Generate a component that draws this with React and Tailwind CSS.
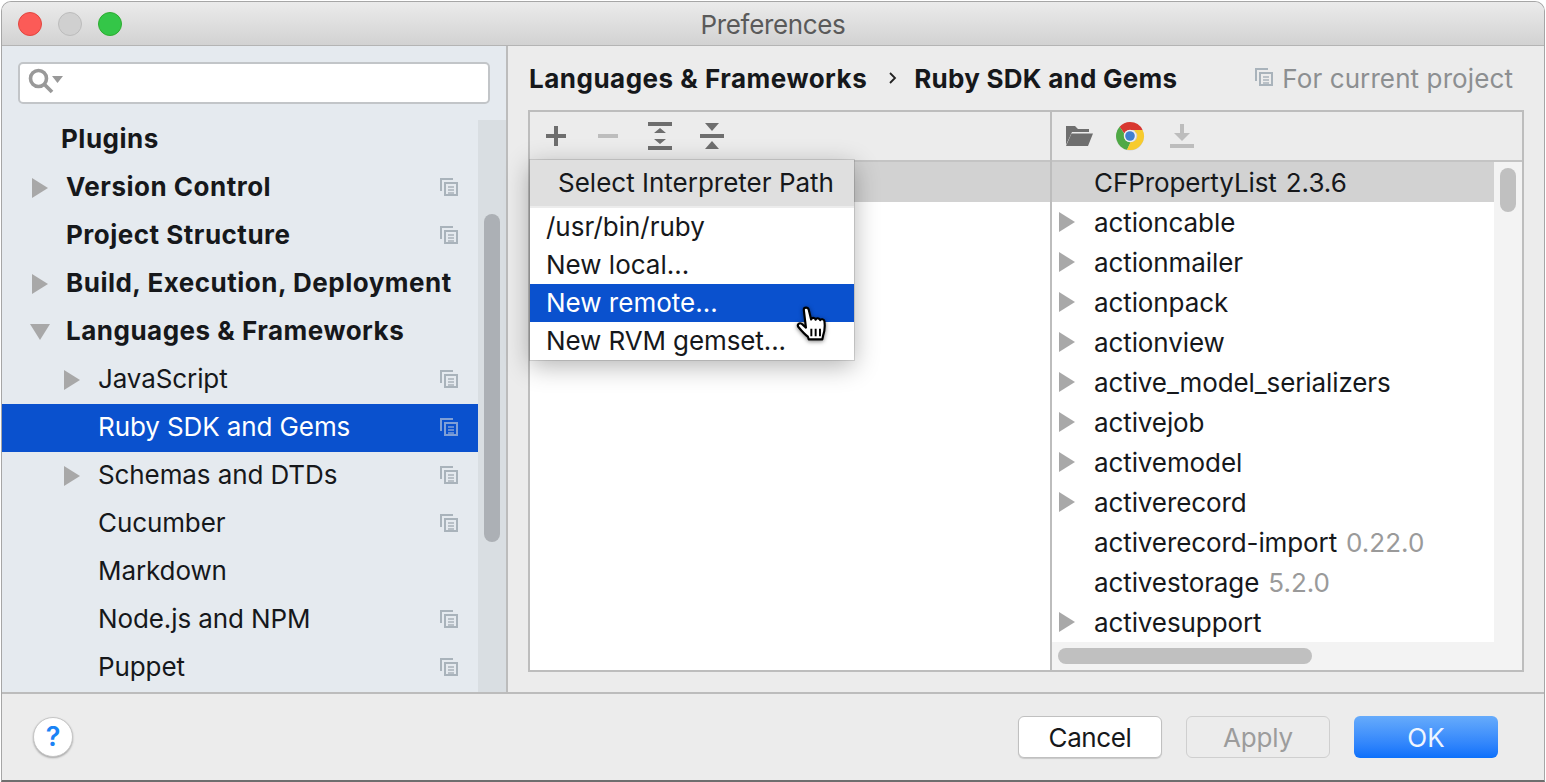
import React from "react";

const sidebarRows = [
  { label: "Plugins", bold: true, pad: "pl-[59px]", copy: false },
  { label: "Version Control", bold: true, pad: "pl-[30px]", gutter: "w-[34px]", arrow: "right", copy: true },
  { label: "Project Structure", bold: true, pad: "pl-[30px]", gutter: "w-[34px]", copy: true },
  { label: "Build, Execution, Deployment", bold: true, pad: "pl-[30px]", gutter: "w-[34px]", arrow: "right", copy: false },
  { label: "Languages & Frameworks", bold: true, pad: "pl-[30px]", gutter: "w-[34px]", arrow: "down", copy: false },
  { label: "JavaScript", pad: "pl-[62px]", gutter: "w-[34px]", arrow: "right", copy: true },
  { label: "Ruby SDK and Gems", pad: "pl-[62px]", gutter: "w-[34px]", copy: true, selected: true },
  { label: "Schemas and DTDs", pad: "pl-[62px]", gutter: "w-[34px]", arrow: "right", copy: true },
  { label: "Cucumber", pad: "pl-[62px]", gutter: "w-[34px]", copy: true },
  { label: "Markdown", pad: "pl-[62px]", gutter: "w-[34px]", copy: false },
  { label: "Node.js and NPM", pad: "pl-[62px]", gutter: "w-[34px]", copy: true },
  { label: "Puppet", pad: "pl-[62px]", gutter: "w-[34px]", copy: true },
];

const gems = [
  { name: "CFPropertyList", version: "2.3.6", selected: true, dark: true },
  { name: "actioncable", arrow: true },
  { name: "actionmailer", arrow: true },
  { name: "actionpack", arrow: true },
  { name: "actionview", arrow: true },
  { name: "active_model_serializers", arrow: true },
  { name: "activejob", arrow: true },
  { name: "activemodel", arrow: true },
  { name: "activerecord", arrow: true },
  { name: "activerecord-import", version: "0.22.0" },
  { name: "activestorage", version: "5.2.0" },
  { name: "activesupport", arrow: true },
];

const CopyIcon = ({ color = "#a9b3bb" }) => (
  <svg width="18" height="18" viewBox="0 0 18 18" fill="none" stroke={color} strokeWidth="2" className="-mt-[2px]">
    <path d="M13 1H1v12" />
    <rect x="5" y="5" width="12" height="12" />
    <path d="M8 9h6M8 12h6M8 15h6" strokeWidth="1.6" />
  </svg>
);

const ArrowRight = () => (
  <svg width="16" height="20" viewBox="0 0 16 20" fill="#a8a8a8">
    <path d="M0 0l16 10L0 20z" />
  </svg>
);

const ArrowDown = () => (
  <svg width="20" height="16" viewBox="0 0 20 16" fill="#a8a8a8" className="-ml-[2px]">
    <path d="M0 0h20L10 16z" />
  </svg>
);

const SearchIcon = () => (
  <svg width="36" height="26" viewBox="0 0 36 26" fill="none" className="-mt-[4px]">
    <circle cx="10.5" cy="10.5" r="8" stroke="#999" strokeWidth="3.6" />
    <path d="M16 16l8 8" stroke="#999" strokeWidth="3.8" />
    <path d="M24 8h11l-5.5 7z" fill="#999" />
  </svg>
);

const ChromeIcon = () => (
  <svg width="30" height="30" viewBox="0 0 30 30">
    <circle cx="15" cy="15.6" r="14" fill="#000" opacity="0.12" />
    <path d="M15 1a14 14 0 0 1 12.6 8H15a6 6 0 0 0-5.6 3.6L4.6 5.7A14 14 0 0 1 15 1z" fill="#d8372f" />
    <path d="M4.6 5.7l4.8 7.4a6 6 0 0 0 6.3 7.9L12 28.7A14 14 0 0 1 4.6 5.7z" fill="#4fa945" />
    <path d="M27.6 9A14 14 0 0 1 12 28.7l3.7-7.7A6 6 0 0 0 20 10.4L19 9z" fill="#f7cb2d" />
    <circle cx="15" cy="15" r="6.2" fill="#f1f1f1" />
    <circle cx="15" cy="15" r="4.8" fill="#3f7fd0" />
  </svg>
);

const HandCursor = () => (
  <svg width="35" height="41" viewBox="0 0 32 38" className="drop-shadow-[0_1px_2px_rgba(0,0,0,0.5)]">
    <path
      d="M7 3.500c0-2.600 4-2.600 4.600 0l2.200 9c.3-2 3.600-2.200 4.200.2.400-1.800 3.600-1.800 4.200.4.600-1.400 3.600-1 3.900 1 .6 4 .3 9-1.200 13.400l-.7 3.400H11.600l-.8-2.400C8 26.500 4.500 22.500 2 19.500c-1.500-2 .8-4.500 3-3l4 3.500z"
      fill="#fff"
      stroke="#000"
      strokeWidth="2"
      strokeLinejoin="round"
    />
    <path d="M14 21v7M18 21v7M22 21v7" stroke="#000" strokeWidth="1.8" />
  </svg>
);

const SidebarRow = ({ row }) => (
  <div
    className={`flex h-[48px] items-center pr-[20px] ${row.pad} ${row.selected ? "bg-[#0a51ce] text-white" : "text-[#16181b]"}`}
  >
    {row.gutter && (
      <div className={`${row.gutter} flex items-center`}>
        {row.arrow === "right" && <ArrowRight />}
        {row.arrow === "down" && <ArrowDown />}
      </div>
    )}
    <span className={`flex-1 pb-[4px] text-[26px] whitespace-nowrap ${row.bold ? "font-bold tracking-[0.5px]" : "tracking-[-0.1px]"}`}>
      {row.label}
    </span>
    {row.copy && <CopyIcon color={row.selected ? "#7f9fd6" : "#a9b3bb"} />}
  </div>
);

const GemRow = ({ gem }) => (
  <div className={`flex h-[40px] items-center pl-[7px] ${gem.selected ? "bg-[#d2d2d2]" : ""}`}>
    <div className="flex w-[35px] items-center">{gem.arrow && <ArrowRight />}</div>
    <span className="text-[26px] tracking-[-0.1px] text-[#16181b] whitespace-nowrap">{gem.name}</span>
    {gem.version && (
      <span className={`ml-[9px] text-[26px] ${gem.dark ? "text-[#16181b]" : "text-[#9a9a9a]"}`}>{gem.version}</span>
    )}
  </div>
);

const FooterButton = ({ children, className }) => (
  <button className={`flex h-[42px] w-[144px] items-center justify-center rounded-[6px] text-[26px] ${className}`}>
    {children}
  </button>
);

export default function App() {
  return (
    <div className="h-[782px] w-[1546px] overflow-hidden bg-white px-[1px] pt-[1px] font-['Inter',sans-serif]">
      <div className="flex h-[781px] flex-col overflow-hidden rounded-t-[10px] border border-b-2 border-[#a6a6a6] border-b-[#6e6e6e] bg-[#ececec]">
        {/* title bar */}
        <div className="relative flex h-[44px] shrink-0 items-center justify-center border-b border-[#b4b4b4] bg-gradient-to-b from-[#ebebeb] to-[#d2d2d2]">
          <div className="absolute left-[16px] top-[10px] flex gap-[16px]">
            <div className="h-[24px] w-[24px] rounded-full border border-[#e2463f] bg-[#fc5b57]"></div>
            <div className="h-[24px] w-[24px] rounded-full border border-[#bcbcbc] bg-[#d0d0d0]"></div>
            <div className="h-[24px] w-[24px] rounded-full border border-[#2dac2f] bg-[#34c648]"></div>
          </div>
          <span className="pt-[2px] text-[26px] tracking-[-0.35px] text-[#5a5a5a]">Preferences</span>
        </div>

        <div className="flex h-[648px] shrink-0 border-b-2 border-[#bcbcbc]">
          {/* sidebar */}
          <div className="flex w-[506px] shrink-0 flex-col border-r-2 border-[#bcbcbc] bg-[#e5eaef]">
            <div className="h-[74px] shrink-0 pl-[16px] pr-[16px] pt-[16px]">
              <div className="flex h-[42px] w-[472px] items-center rounded-[5px] border-2 border-[#c2c5c8] bg-white pl-[8px]">
                <SearchIcon />
              </div>
            </div>
            <div className="flex min-h-0 flex-1">
              <div className="-mt-[4px] w-[476px] shrink-0">
                {sidebarRows.map((row) => (
                  <SidebarRow key={row.label} row={row} />
                ))}
              </div>
              <div className="flex-1 bg-[#d9dee2] pl-[6px] pt-[94px]">
                <div className="h-[328px] w-[16px] rounded-full bg-[#acb0b5]"></div>
              </div>
            </div>
          </div>

          {/* main */}
          <div className="flex min-w-0 flex-1 flex-col pl-[20px] pr-[20px]">
            <div className="flex h-[64px] shrink-0 items-center justify-between pl-[1px] pr-[11px]">
              <div className="flex items-center text-[26px] font-bold tracking-[0.5px] text-[#16181b]">
                <span>Languages &amp; Frameworks</span>
                <svg width="8" height="14" viewBox="0 0 8 14" fill="none" stroke="#222" strokeWidth="1.8" className="ml-[22px] mr-[17px]">
                  <path d="M1 2l5 5-5 5" />
                </svg>
                <span className="tracking-[0.25px]">Ruby SDK and Gems</span>
              </div>
              <div className="flex items-center gap-[9px] text-[26px] tracking-[0.1px] text-[#8c8f91]">
                <CopyIcon />
                <span>For current project</span>
              </div>
            </div>

            <div className="relative flex h-[562px] w-[996px] shrink-0 border-2 border-[#bdbdbd] bg-white">
              {/* interpreters */}
              <div className="flex w-[522px] shrink-0 flex-col border-r-2 border-[#bdbdbd]">
                <div className="flex h-[50px] shrink-0 items-center gap-[28px] border-b-2 border-[#c4c4c4] bg-[#ececec] pl-[14px]">
                  <svg width="24" height="24" viewBox="0 0 24 24" fill="#6e6e6e" className="-mt-[1px]">
                    <path d="M2 10h8V2h4v8h8v4h-8v8h-4v-8H2z" />
                  </svg>
                  <svg width="24" height="24" viewBox="0 0 24 24" fill="#bdbdbd" className="-mt-[1px]">
                    <path d="M2 10h20v4H2z" />
                  </svg>
                  <svg width="24" height="28" viewBox="0 0 24 28" fill="#6e6e6e">
                    <path d="M0 0h24v4H0zM0 24h24v4H0zM12 6l6 5H6zM6 17h12l-6 5z" />
                  </svg>
                  <svg width="24" height="28" viewBox="0 0 24 28" fill="#6e6e6e">
                    <path d="M0 12h24v4H0zM5 1h14l-7 8zM12 19l7 8H5z" />
                  </svg>
                </div>
                <div className="h-[40px] shrink-0 bg-[#d2d2d2]"></div>
              </div>

              {/* gems */}
              <div className="flex min-w-0 flex-1 flex-col">
                <div className="flex h-[50px] shrink-0 items-center border-b-2 border-[#c4c4c4] bg-[#ececec] pl-[13px]">
                  <svg width="28" height="22" viewBox="0 0 28 22" fill="#6e6e6e">
                    <path d="M1 20V1h9l3 3h11v3H7z" />
                    <path d="M6.500 8.500H28L23 21H1z" />
                  </svg>
                  <div className="ml-[22px]">
                    <ChromeIcon />
                  </div>
                  <svg width="24" height="24" viewBox="0 0 24 24" fill="#bdbdbd" className="ml-[25px]">
                    <path d="M10 0h4v9h6l-8 8-8-8h6zM0 20h24v4H0z" />
                  </svg>
                </div>
                <div className="flex min-h-0 flex-1">
                  <div className="w-[442px] shrink-0 overflow-hidden">
                    {gems.map((gem) => (
                      <GemRow key={gem.name} gem={gem} />
                    ))}
                  </div>
                  <div className="flex-1 bg-[#f3f3f3] pl-[6px] pt-[6px]">
                    <div className="h-[44px] w-[16px] rounded-full bg-[#c0c0c0]"></div>
                  </div>
                </div>
                <div className="h-[28px] shrink-0 bg-[#f3f3f3] pl-[6px] pt-[6px]">
                  <div className="h-[16px] w-[254px] rounded-full bg-[#c0c0c0]"></div>
                </div>
              </div>

              {/* popup */}
              <div className="absolute left-0 top-[48px] w-[324px] bg-white text-[26px] text-[#16181b] shadow-[0_0_0_1px_rgba(0,0,0,0.12),0_6px_24px_rgba(0,0,0,0.3)]">
                <div className="flex h-[48px] items-center justify-center border-b-2 border-[#ececec] bg-[#dfdfdf] pb-[2px] pl-[8px]">
                  Select Interpreter Path
                </div>
                <div className="flex h-[38px] items-center pb-[2px] pl-[16px]">/usr/bin/ruby</div>
                <div className="flex h-[38px] items-center pb-[2px] pl-[16px]">New local...</div>
                <div className="flex h-[38px] items-center bg-[#0a51ce] pb-[2px] pl-[16px] text-white">New remote...</div>
                <div className="flex h-[38px] items-center pb-[2px] pl-[16px] tracking-[-0.1px]">New RVM gemset...</div>
              </div>
              <div className="absolute left-[266px] top-[194px]">
                <HandCursor />
              </div>
            </div>
          </div>
        </div>

        {/* footer */}
        <div className="flex flex-1 items-center justify-between pl-[31px] pr-[46px]">
          <div className="flex h-[40px] w-[40px] items-center justify-center rounded-full border border-[#c6c6c6] bg-white text-[27px] font-semibold text-[#1a83f5] shadow-[0_1px_2px_rgba(0,0,0,0.3)]">
            ?
          </div>
          <div className="flex gap-[24px]">
            <FooterButton className="border border-[#c0c0c0] bg-white tracking-[-0.4px] text-[#16181b] shadow-[0_1px_1px_rgba(0,0,0,0.15)]">Cancel</FooterButton>
            <FooterButton className="border border-[#cfcfcf] bg-[#ececec] tracking-[-0.2px] text-[#9c9c9c]">Apply</FooterButton>
            <FooterButton className="bg-gradient-to-b from-[#66abfb] to-[#0a70fb] text-[#eef5ff]">OK</FooterButton>
          </div>
        </div>
      </div>
    </div>
  );
}
